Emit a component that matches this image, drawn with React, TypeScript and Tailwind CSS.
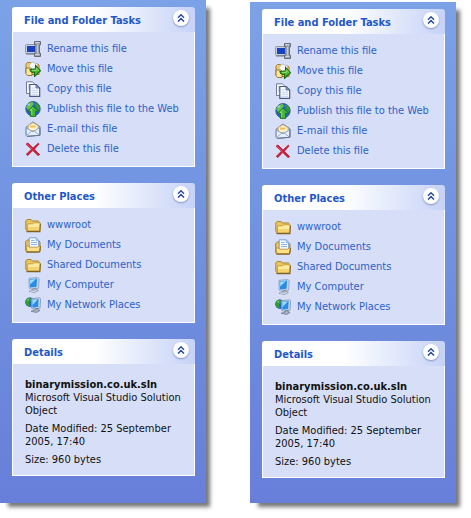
import React from 'react';

interface TaskLink {
  label: string;
  icon: React.FC;
}

const RenameIcon: React.FC = () => (
  <svg viewBox="0 0 16 16" className="size-4 shrink-0" aria-hidden="true">
    <rect x="0.5" y="3.5" width="10.5" height="9" rx="1" fill="#c9cedb" stroke="#8f96aa" />
    <rect x="2" y="5" width="8" height="6" fill="#1741bd" />
    <path d="M1 13h9" stroke="#6f727c" />
    <path d="M9.5.5h6v3.4h-1v8.2h1v3.4h-6v-3.4h1.5V3.9H9.5z" fill="#9fa4b2" stroke="#5d6270" strokeWidth="0.9" />
    <path d="M10.2 1.6h4M12.2 4v8M10.2 13.4h4" fill="none" stroke="#e3e6ee" strokeWidth="0.8" />
  </svg>
);

const MoveIcon: React.FC = () => (
  <svg viewBox="0 0 16 16" className="size-4 shrink-0" aria-hidden="true">
    <path d="M1 6V3l1.5-1.5h3L7 3h5.5L14 4v9.5H2L1 12z" fill="#f1cf68" stroke="#a37d2c" />
    <path d="M4 5 7 1 12.5 3v6L5 10z" fill="#fafbff" stroke="#a9aebf" strokeWidth="0.7" />
    <path d="M1 7h5l1 1.5v6H2.5L1 12.5z" fill="#ffe899" stroke="#8e6a26" strokeWidth="0.9" />
    <path d="M5 8.6c.3 2 1.5 2.9 4.5 2.8v4.1l6-5.8-5-5.3v3.3c-2.6.3-3.9.7-5.5.9z" fill="#4bb631" stroke="#176b18" strokeWidth="1.1" />
    <path d="M7 9.6h4.3V7l2.8 2.6" fill="none" stroke="#a5e77e" strokeWidth="0.8" />
  </svg>
);

const CopyIcon: React.FC = () => (
  <svg viewBox="0 0 16 16" className="size-4 shrink-0" aria-hidden="true">
    <path d="M1.5.8h6L10 3.5v9H1.5z" fill="#f9fbff" stroke="#6d7c9d" />
    <path d="M3 4h3M3 6h2M3 8h2" stroke="#a6bdeb" />
    <path d="M4.8 3.5h6.2l3.7 3.5v8.3H4.8z" fill="#f7faff" stroke="#4b5b80" strokeWidth="1.2" />
    <path d="M11 3.5V7h3.7z" fill="#8da7d8" stroke="#4b5b80" strokeWidth="0.8" />
    <path d="M6.5 7h3M6.5 9.3h6.5M6.5 11.3h6.5M6.5 13.3h6.5" stroke="#b8ccf2" strokeWidth="0.8" />
  </svg>
);

const PublishIcon: React.FC = () => (
  <svg viewBox="0 0 16 16" className="size-4 shrink-0" aria-hidden="true">
    <circle cx="8" cy="7.8" r="7.2" fill="#2763c7" stroke="#345780" strokeWidth="0.9" />
    <path d="M1.2 6C2 3 4.5 1 7.5.9L9 3 7 5 6 8 3 9z" fill="#65c64c" />
    <path d="M10 1.2c3 1 4.7 3.4 4.9 6l-1.8 2L10.5 6z" fill="#319b36" />
    <path d="M2.3 3.5 5 2.2 4.3 5z" fill="#a7d7ff" />
    <path d="m8 5.2 5.8 5h-3.2v5.3H5.4v-5.3H2.2z" fill="#3fb637" stroke="#176d22" strokeWidth="0.8" />
    <path d="m8 6.7-3 2.8h1.8V14" fill="none" stroke="#9de276" strokeWidth="0.9" />
  </svg>
);

const EmailIcon: React.FC = () => (
  <svg viewBox="0 0 16 16" className="size-4 shrink-0" aria-hidden="true">
    <path d="m1 6.2 7-5.3 7 4.8V14l-13 1.5-1-1.5z" fill="#a9bfdf" stroke="#7488ad" />
    <path d="M3.2 4.5 8 1.7l5 3v5H3.5z" fill="#fff3c7" stroke="#c6a455" strokeWidth="0.7" />
    <path d="M5 4.5h5.5v2H5z" fill="#edbe5d" />
    <path d="M1.3 7 8 10.8l6.7-4.2v7.7l-12.4.9-1-1z" fill="#e5effe" stroke="#8297bd" strokeWidth="0.9" />
    <path d="m1.8 14.3 5-4.2M14.3 14l-5-4" stroke="#8ea5cd" strokeWidth="0.9" />
    <path d="m2.2 15.3 12.7-1V6.5" fill="none" stroke="#657691" />
  </svg>
);

const DeleteIcon: React.FC = () => (
  <svg viewBox="0 0 16 16" className="size-4 shrink-0" aria-hidden="true">
    <path d="M1 3.2 3 2l5 5 5.3-4.8.8.7-4.7 5.3 5.2 5.5-1.6.8-5.2-5-5 5-1.5-1.2 5.2-5.1z" fill="#d31e37" stroke="#b5203a" strokeWidth="0.9" />
    <path d="m2 3.2 5 4.8" stroke="#f0788a" strokeWidth="0.6" />
  </svg>
);

const FolderIcon: React.FC = () => (
  <svg viewBox="0 0 16 16" className="size-4 shrink-0" aria-hidden="true">
    <path d="M.8 12V3.8L2 2.5h4L7.3 4h6l1.2 1v2l-.5 7H2z" fill="#edc65b" stroke="#aa8330" />
    <path d="M2.8 6.8h5l1-1h6.4l-.5 8H2.3z" fill="#ffeb9e" stroke="#bb933a" strokeWidth="0.8" />
    <path d="M3.1 10h11.3l-.2 3H3z" fill="#f6d36f" />
    <path d="M1.5 14.6h13.4l.5-8" fill="none" stroke="#806125" strokeWidth="1.1" />
  </svg>
);

const DocumentsIcon: React.FC = () => (
  <svg viewBox="0 0 16 16" className="size-4 shrink-0" aria-hidden="true">
    <path d="M.7 13V4.5L2.5 3h10L15 5v8.5L13.5 15h-12z" fill="#eec45a" stroke="#a67c2b" />
    <path d="M4.2.8h7l2.5 2.8v8H4.2z" fill="#eff7ff" stroke="#7498cb" strokeWidth="0.9" />
    <path d="M11.2.8v2.8h2.5M6 3.5h3.5M6 5.5h6M6 7.5h6" fill="none" stroke="#78a7df" strokeWidth="0.8" />
    <path d="M1 9h2.5l1 1.2h8.2L14 9h1.3l-.5 5.5H2z" fill="#ffe18b" stroke="#b68a32" strokeWidth="0.8" />
    <path d="M1.5 15.1h13.2l.7-6" fill="none" stroke="#806125" />
  </svg>
);

const ComputerIcon: React.FC = () => (
  <svg viewBox="0 0 16 16" className="size-4 shrink-0" aria-hidden="true">
    <path d="m4 1.3 8.3-.8 2 1.2-.8 9.5-7.5 1-2-1.2z" fill="#c5d4ea" stroke="#8ba0bf" strokeWidth="0.8" />
    <path d="m4.6 2.3 7.5-.8-.6 8.2-6.5.8z" fill="#298be6" />
    <path d="m5 2.7 6-.6-5.8 5.5z" fill="#9bddff" />
    <path d="m8 11.5 3-.5.4 1.5 2 .8-3.9 2.2-5.5-1.2 3.7-1.3z" fill="#a9b3c3" stroke="#7b8798" strokeWidth="0.7" />
    <path d="m5 14 4.5.6 2.8-1.5" fill="none" stroke="#f0f4fb" strokeWidth="0.7" />
  </svg>
);

const NetworkIcon: React.FC = () => (
  <svg viewBox="0 0 16 16" className="size-4 shrink-0" aria-hidden="true">
    <circle cx="5" cy="5.2" r="4.8" fill="#265ebe" />
    <path d="M.4 4.5C1.2 2 3 .7 5 .5L6 3 4 5.5l1.2 4.2C2 9 .3 7 .4 4.5z" fill="#319d32" />
    <path d="m2 2.8 2-1-.5 2z" fill="#a2e37c" />
    <path d="m6.3 1.8 7.9-1 1.5 1-.7 9.4-6.7 1-1.8-1.1z" fill="#c9d7ea" stroke="#7b91b0" strokeWidth="0.8" />
    <path d="m7 2.8 6.7-.8-.5 8-5.8.7z" fill="#298ce5" />
    <path d="m7.4 3.1 5.4-.6-5.3 5.6z" fill="#9eddff" />
    <path d="m10 12 3-.5.3 1.3 1.7.7-3.5 2-5.5-1.2 3.7-1z" fill="#a8b1c0" stroke="#667489" strokeWidth="0.7" />
  </svg>
);

const fileTasks: TaskLink[] = [
  { label: 'Rename this file', icon: RenameIcon },
  { label: 'Move this file', icon: MoveIcon },
  { label: 'Copy this file', icon: CopyIcon },
  { label: 'Publish this file to the Web', icon: PublishIcon },
  { label: 'E-mail this file', icon: EmailIcon },
  { label: 'Delete this file', icon: DeleteIcon },
];

const places: TaskLink[] = [
  { label: 'wwwroot', icon: FolderIcon },
  { label: 'My Documents', icon: DocumentsIcon },
  { label: 'Shared Documents', icon: FolderIcon },
  { label: 'My Computer', icon: ComputerIcon },
  { label: 'My Network Places', icon: NetworkIcon },
];

const Panel: React.FC<{ title: string; children: React.ReactNode }> = ({ title, children }) => (
  <section>
    <header className="flex h-[25px] items-start justify-between rounded-t-[3px] bg-linear-to-r from-white from-45% to-[#c6d3f7] pr-[6px] pl-3">
      <h2 className="text-[11px] leading-[28px] font-bold text-[#1f58c8]">{title}</h2>
      <button
        type="button"
        aria-label={`Collapse ${title}`}
        className="mt-[3px] flex size-4 items-center justify-center rounded-full bg-white shadow-[0_1px_2px_#7f92c4]"
      >
        <svg viewBox="0 0 8 8" className="size-2" aria-hidden="true">
          <path d="m1 3.8 3-3 3 3M1 7.6l3-3 3 3" fill="none" stroke="#24489c" strokeWidth="1.4" />
        </svg>
      </button>
    </header>
    <div className="border border-t-0 border-white bg-[#d6dff7] px-3">{children}</div>
  </section>
);

const LinkList: React.FC<{ links: TaskLink[] }> = ({ links }) => (
  <ul className="pt-[7px] pb-[7px]">
    {links.map(({ label, icon: Icon }) => (
      <li key={label}>
        <a href="#" className="flex h-5 items-center gap-[6px] text-[11px] whitespace-nowrap text-[#2d62c8] hover:underline">
          <Icon />
          {label}
        </a>
      </li>
    ))}
  </ul>
);

const Sidebar: React.FC = () => (
  <aside className="flex h-full flex-col gap-4 bg-linear-to-b from-[#7ba2e7] to-[#677fd9] pt-[7px] pr-[11px] pb-[25px] pl-3 shadow-[6px_6px_4px_-2px_#777]">
    <Panel title="File and Folder Tasks">
      <LinkList links={fileTasks} />
    </Panel>
    <Panel title="Other Places">
      <LinkList links={places} />
    </Panel>
    <Panel title="Details">
      <div className="space-y-[5px] pt-[14px] pb-[9px] text-[11px] leading-[13px] text-[#111]">
        <div>
          <h3 className="font-bold">binarymission.co.uk.sln</h3>
          <p>Microsoft Visual Studio Solution Object</p>
        </div>
        <p>Date Modified: 25 September 2005, 17:40</p>
        <p>Size: 960 bytes</p>
      </div>
    </Panel>
  </aside>
);

export default function App() {
  return (
    <main className="grid grid-cols-2 gap-11 bg-white pr-[15px] pb-[15px] font-['DejaVu_Sans_Condensed','DejaVu_Sans',sans-serif]">
      <Sidebar />
      <div className="pt-[2px]">
        <Sidebar />
      </div>
    </main>
  );
}
